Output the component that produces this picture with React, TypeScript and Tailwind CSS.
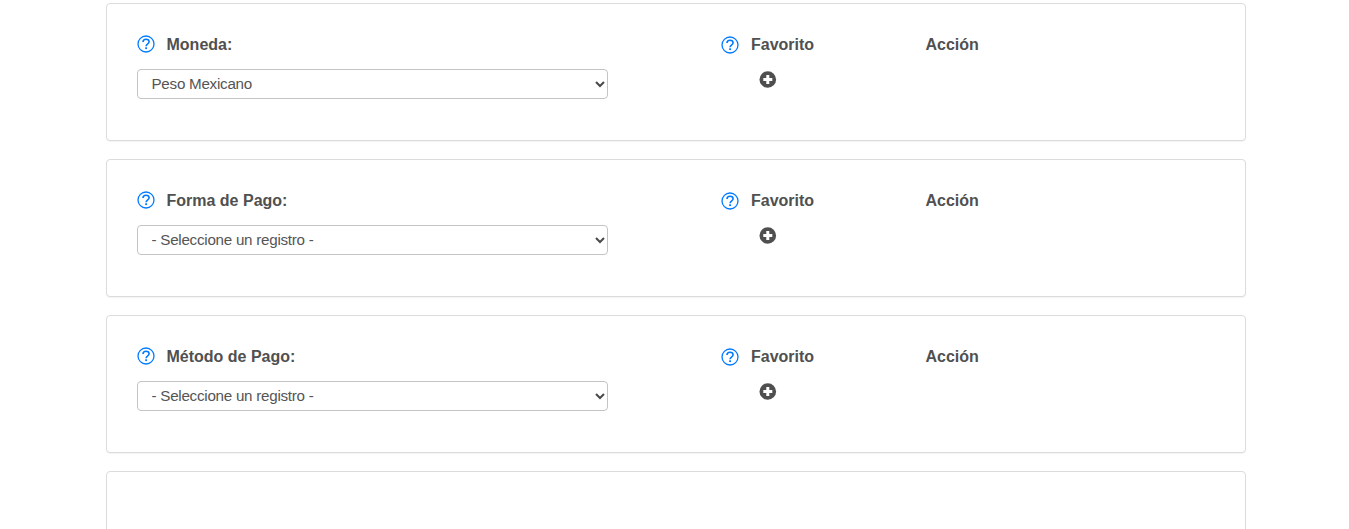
function Help({ className = "" }: { className?: string }) {
  return (
    <svg className={`h-[18px] w-[18px] shrink-0 ${className}`} viewBox="0 0 18 18" fill="none" stroke="#007bff">
      <circle cx="9" cy="9" r="8" strokeWidth="1.3" />
      <path d="M6 6.9C6 5.1 7.2 4.2 9 4.2s3.1 1 3.1 2.6c0 2.1-3 2-3 4.5" strokeWidth="1.6" />
      <rect x="8.2" y="12.3" width="1.8" height="1.8" fill="#007bff" stroke="none" />
    </svg>
  );
}

function Plus() {
  return (
    <svg className="mt-[14px] ml-[38px] h-[17px] w-[18px]" viewBox="0 0 18 17">
      <circle cx="8.8" cy="8.5" r="8.3" fill="#4f4f4f" />
      <path d="M8.8 4v9M4.3 8.5h9" stroke="#fff" strokeWidth="3" />
    </svg>
  );
}

function Card({ label, value }: { label: string; value: string }) {
  return (
    <section className="flex h-[138px] shrink-0 rounded-[4px] border border-[#dcdcdc] bg-white pt-[29px] pl-[30px] shadow-[0_1px_1px_rgba(0,0,0,0.05)]">
      <div className="w-[584px]">
        <div className="flex h-6 items-center gap-[11.5px]">
          <Help className="-mt-[2px]" />
          <span>{label}</span>
        </div>
        <div className="relative mt-[12px] h-[30px] w-[471px]">
          <select className="block h-full w-full appearance-none rounded-[4px] border border-[#c4c4c4] bg-white px-[13.5px] text-[15.2px] font-normal tracking-[-0.26px] text-[#555]">
            <option>{value}</option>
          </select>
          <svg className="pointer-events-none absolute top-[11px] right-[3px] h-[8px] w-[10px]" viewBox="0 0 10 8" fill="none">
            <path d="M1 2l4 4 4-4" stroke="#4a4a4a" strokeWidth="2" />
          </svg>
        </div>
      </div>
      <div className="w-[204.5px]">
        <div className="flex h-6 items-center gap-3">
          <Help />
          <span>Favorito</span>
        </div>
        <Plus />
      </div>
      <div className="flex h-6 items-center">Acción</div>
    </section>
  );
}

export default function App() {
  return (
    <main className="h-[529px] overflow-hidden bg-white pt-[3px] pl-[106px] font-['Liberation_Sans',Arial,sans-serif] text-[16px] font-bold text-[#505050]">
      <div className="flex w-[1140px] flex-col gap-[18px]">
        <Card label="Moneda:" value="Peso Mexicano" />
        <Card label="Forma de Pago:" value="- Seleccione un registro -" />
        <Card label="Método de Pago:" value="- Seleccione un registro -" />
        <section className="h-[138px] rounded-[4px] border border-[#dcdcdc] bg-white" />
      </div>
    </main>
  );
}
